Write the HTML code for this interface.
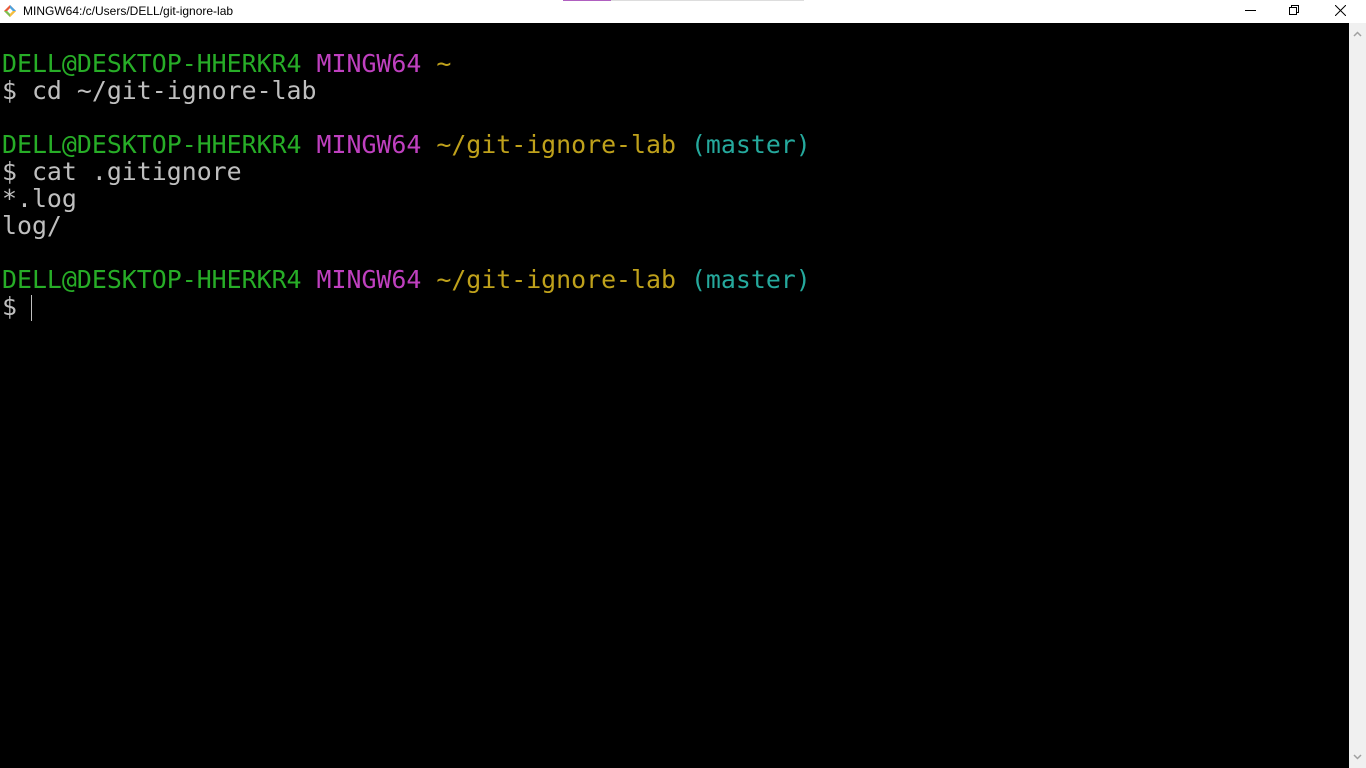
<!DOCTYPE html>
<html><head><meta charset="utf-8"><style>
*{margin:0;padding:0;box-sizing:border-box}
body{width:1366px;height:768px;overflow:hidden;background:#fff;font-family:"Liberation Sans",sans-serif;position:relative}
.title{position:absolute;left:0;top:0;width:1366px;height:23px;background:#fff}
.title .t{position:absolute;left:23px;top:4px;font-size:12px;color:#000}
.icon{position:absolute;left:4px;top:5px;width:12px;height:12px}
.term{position:absolute;left:0;top:23px;width:1349px;height:745px;background:#000;font-family:"DejaVu Sans Mono","Liberation Mono",monospace;font-size:24.88px;color:#bfbfbf}
.row{position:absolute;left:2px;height:27px;line-height:27px;white-space:pre}
.g{color:#27ad27}.m{color:#bf40bf}.y{color:#bfa11b}.c{color:#25a99d}
.sb{position:absolute;left:1349px;top:23px;width:17px;height:745px;background:#f0f0f0}
.cur{position:absolute;left:31px;top:295px;width:1px;height:26px;background:#bfbfbf}
</style></head><body>
<div class="title">
<svg class="icon" viewBox="0 0 12 12"><path d="M6 0L12 6L6 12L0 6Z" fill="#e85b3a"/><path d="M6 0L12 6L6 6Z" fill="#4aa3df"/><path d="M0 6L6 12L6 6Z" fill="#7cc14f"/><path d="M6 6L12 6L6 12Z" fill="#f3c03d"/><rect x="4" y="4" width="4" height="4" fill="#fff" transform="rotate(45 6 6)"/></svg>
<div class="t">MINGW64:/c/Users/DELL/git-ignore-lab</div>
<div style="position:absolute;left:563px;top:0;width:48px;height:1px;background:#b060c0"></div>
<div style="position:absolute;left:611px;top:0;width:193px;height:1px;background:#ddd"></div>
<svg style="position:absolute;left:1245px;top:10px" width="11" height="2"><rect width="11" height="1" fill="#000"/></svg>
<svg style="position:absolute;left:1289px;top:5px" width="11" height="11" viewBox="0 0 11 11" fill="none" stroke="#000"><rect x="0.5" y="2.5" width="7" height="7"/><path d="M2.5 2.5V0.5H9.5V7.5H7.5"/></svg>
<svg style="position:absolute;left:1335px;top:5px" width="11" height="11" viewBox="0 0 11 11" stroke="#000"><path d="M0 0L11 11M11 0L0 11"/></svg>
</div>
<div class="term">
<div class="row" style="top:27px"><span class="g">DELL@DESKTOP-HHERKR4</span> <span class="m">MINGW64</span> <span class="y">~</span></div>
<div class="row" style="top:54px">$ cd ~/git-ignore-lab</div>
<div class="row" style="top:108px"><span class="g">DELL@DESKTOP-HHERKR4</span> <span class="m">MINGW64</span> <span class="y">~/git-ignore-lab</span> <span class="c">(master)</span></div>
<div class="row" style="top:135px">$ cat .gitignore</div>
<div class="row" style="top:162px">*.log</div>
<div class="row" style="top:189px">log/</div>
<div class="row" style="top:243px"><span class="g">DELL@DESKTOP-HHERKR4</span> <span class="m">MINGW64</span> <span class="y">~/git-ignore-lab</span> <span class="c">(master)</span></div>
<div class="row" style="top:270px">$</div>
</div>
<div class="cur"></div>
<div class="sb">
<svg style="position:absolute;left:4px;top:8px" width="9" height="6" viewBox="0 0 9 6" fill="none" stroke="#a0a0a0" stroke-width="1.5"><path d="M1 5L4.5 1.5L8 5"/></svg>
<svg style="position:absolute;left:4px;top:731px" width="9" height="6" viewBox="0 0 9 6" fill="none" stroke="#a0a0a0" stroke-width="1.5"><path d="M1 1L4.5 4.5L8 1"/></svg>
</div>
</body></html>
